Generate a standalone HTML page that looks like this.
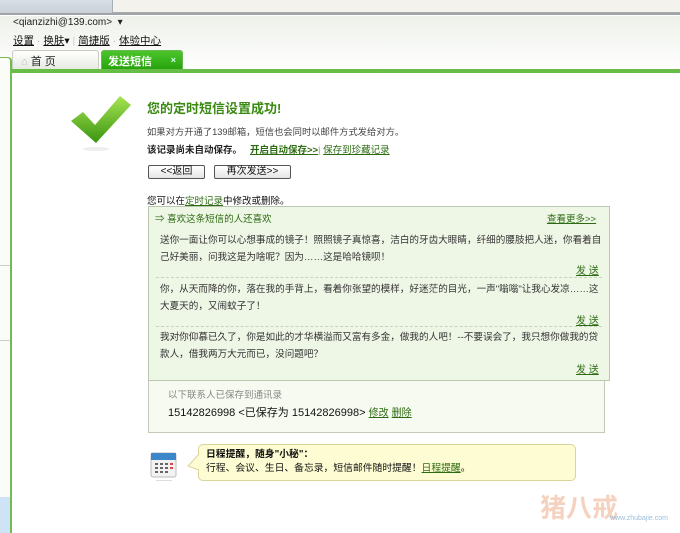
<!DOCTYPE html>
<html><head><meta charset="utf-8"><style>
*{margin:0;padding:0;box-sizing:border-box}
body{width:680px;height:533px;overflow:hidden;background:#fff;font-family:"Liberation Sans","Noto Sans CJK SC",sans-serif;font-size:11px;color:#333;position:relative}
.a{position:absolute}
u{text-decoration:underline}
.g{color:#2d6b12}
</style></head><body>
<div class="a" style="left:0;top:0;width:680px;height:15px;background:linear-gradient(#d8dfe6,#c9d0d6);border-bottom:2px solid #9ea4aa"></div>
<div class="a" style="left:112px;top:0;width:568px;height:13px;background:#f3f2ec;border-left:1px solid #a9b0b8;border-bottom:1px solid #aaa"></div>
<div class="a" style="left:0;top:16px;width:680px;height:54px;background:linear-gradient(#eef1ea,#fff)"></div>
<div class="a" style="left:13px;top:17px;font-size:10px;color:#222">&lt;qianzizhi@139.com&gt; &nbsp;▾</div>
<div class="a" style="left:13px;top:33px;font-size:10.5px;color:#111"><u>设置</u> <span style="color:#aaa">·</span> <u>换肤</u>▾ <span style="color:#ccc">|</span> <u>简捷版</u> <span style="color:#aaa">·</span> <u>体验中心</u></div>
<div class="a" style="left:12px;top:50px;width:87px;height:19px;background:linear-gradient(#fff,#e6ebe1);border:1px solid #c8cfc0;border-bottom:none;border-radius:3px 3px 0 0;padding:2px 0 0 8px;font-size:11px;color:#222"><span style="color:#bbb">⌂</span> 首 页</div>
<div class="a" style="left:101px;top:50px;width:82px;height:19px;background:linear-gradient(#4cc52b,#27a40d);border:1px solid #6ab854;border-bottom:none;border-radius:3px 3px 0 0;padding:2px 0 0 6px;font-size:11px;color:#fff;font-weight:bold">发送短信<span style="position:absolute;right:6px;top:4px;font-size:9px;color:#cfe">×</span></div>
<div class="a" style="left:12px;top:69px;width:668px;height:4px;background:#67bd45"></div>
<div class="a" style="left:0;top:57px;width:12px;height:476px;background:#fbfcf7;border-right:2px solid #72bb52;border-top:1px solid #72bb52;border-radius:0 4px 0 0"></div>
<div class="a" style="left:0;top:265px;width:10px;border-top:1px solid #ccc"></div>
<div class="a" style="left:0;top:340px;width:10px;border-top:1px solid #ccc"></div>
<div class="a" style="left:0;top:497px;width:10px;height:36px;background:#cfe3f6"></div>
<svg class="a" style="left:68px;top:94px" width="66" height="60" viewBox="0 0 66 60"><defs><linearGradient id="k" x1="0" y1="0" x2="0" y2="1"><stop offset="0" stop-color="#a6e453"/><stop offset="1" stop-color="#3a9510"/></linearGradient></defs><path d="M3 27 L15 18 L27 31 L52 2 L63 11 L28 49 Z" fill="url(#k)"/><ellipse cx="28" cy="55" rx="13" ry="2" fill="#eee"/></svg>
<div class="a" style="left:147px;top:98px;font-size:13px;font-weight:bold;color:#3a8a12">您的定时短信设置成功!</div>
<div class="a" style="left:147px;top:124px;font-size:9.3px;color:#444">如果对方开通了139邮箱，短信也会同时以邮件方式发给对方。</div>
<div class="a" style="left:147px;top:142px;font-size:9.5px;color:#222"><b>该记录尚未自动保存。</b> &nbsp; <b class="g"><u>开启自动保存&gt;&gt;</u></b><span style="color:#999">|</span> <u class="g">保存到珍藏记录</u></div>
<div class="a" style="left:148px;top:165px;width:57px;height:14px;border:1px solid #555;border-radius:2px;background:linear-gradient(#fff,#e4e4e4);font-size:10px;text-align:center;line-height:12px;color:#111">&lt;&lt;返回</div>
<div class="a" style="left:214px;top:165px;width:77px;height:14px;border:1px solid #555;border-radius:2px;background:linear-gradient(#fff,#e4e4e4);font-size:10px;text-align:center;line-height:12px;color:#111">再次发送&gt;&gt;</div>
<div class="a" style="left:147px;top:193px;font-size:9.5px;color:#111">您可以在<u style="color:#2d6b12">定时记录</u>中修改或删除。</div>
<div class="a" style="left:148px;top:206px;width:462px;height:175px;background:#eef6e6;border:1px solid #b9c7ae"></div>
<div class="a" style="left:155px;top:211px;font-size:9.5px;color:#2d6b12">⇒ 喜欢这条短信的人还喜欢</div>
<div class="a" style="left:547px;top:211px;font-size:9.5px"><u class="g">查看更多&gt;&gt;</u></div>
<div class="a" style="left:160px;top:232px;width:448px;font-size:9.6px;line-height:17px;color:#333">送你一面让你可以心想事成的镜子！照照镜子真惊喜，洁白的牙齿大眼睛，纤细的腰肢把人迷，你看着自己好美丽，问我这是为啥呢？因为……这是哈哈镜呗！</div>
<div class="a" style="left:576px;top:262px;font-size:10px"><u class="g">发 送</u></div>
<div class="a" style="left:156px;top:277px;width:446px;border-top:1px dashed #c8d2be"></div>
<div class="a" style="left:160px;top:281px;width:448px;font-size:9.6px;line-height:17px;color:#333">你，从天而降的你，落在我的手背上，看着你张望的模样，好迷茫的目光，一声"嗡嗡"让我心发凉……这大夏天的，又闹蚊子了！</div>
<div class="a" style="left:576px;top:312px;font-size:10px"><u class="g">发 送</u></div>
<div class="a" style="left:156px;top:326px;width:446px;border-top:1px dashed #c8d2be"></div>
<div class="a" style="left:160px;top:329px;width:440px;font-size:9.6px;line-height:17px;color:#333">我对你仰慕已久了，你是如此的才华横溢而又富有多金，做我的人吧！--不要误会了，我只想你做我的贷款人，借我两万大元而已，没问题吧？</div>
<div class="a" style="left:576px;top:361px;font-size:10px"><u class="g">发 送</u></div>
<div class="a" style="left:148px;top:381px;width:457px;height:52px;background:#f7faf1;border:1px solid #c3cab9;border-top:none"></div>
<div class="a" style="left:168px;top:387px;font-size:9.5px;color:#888">以下联系人已保存到通讯录</div>
<div class="a" style="left:168px;top:404px;font-size:11px;color:#111">15142826998 &lt;已保存为 15142826998&gt; <u class="g" style="font-size:10px">修改</u> <u class="g" style="font-size:10px">删除</u></div>
<svg class="a" style="left:150px;top:450px" width="28" height="32"><rect x="1" y="3" width="25" height="24" rx="2" fill="#f2f2f2" stroke="#bbb"/><rect x="1" y="3" width="25" height="7" fill="#3b87c9"/><g fill="#666"><rect x="5" y="13" width="3" height="2"/><rect x="10" y="13" width="3" height="2"/><rect x="15" y="13" width="3" height="2"/><rect x="20" y="13" width="3" height="2" fill="#d44"/><rect x="5" y="17" width="3" height="2"/><rect x="10" y="17" width="3" height="2"/><rect x="15" y="17" width="3" height="2"/><rect x="20" y="17" width="3" height="2" fill="#d44"/><rect x="5" y="21" width="3" height="2"/><rect x="10" y="21" width="3" height="2"/><rect x="15" y="21" width="3" height="2"/></g><rect x="6" y="30" width="16" height="1" fill="#ddd"/></svg>
<div class="a" style="left:198px;top:444px;width:378px;height:37px;background:#fdfcd2;border:1px solid #d9d49a;border-radius:5px"></div>
<svg class="a" style="left:187px;top:452px" width="13" height="20"><path d="M12 2 L1 14 L12 18" fill="#fdfcd2" stroke="#d9d49a"/></svg>
<div class="a" style="left:206px;top:448px;font-size:9.8px;color:#111;line-height:14px"><b>日程提醒，随身"小秘"：</b><br>行程、会议、生日、备忘录，短信邮件随时提醒！<u class="g">日程提醒</u>。</div>
<div class="a" style="left:540px;top:488px;font-size:26px;color:#f3c7b0;font-weight:bold;opacity:.8">猪八戒</div>
<div class="a" style="left:610px;top:515px;font-size:7px;color:#9cc0dc">www.zhubajie.com</div>
</body></html>
